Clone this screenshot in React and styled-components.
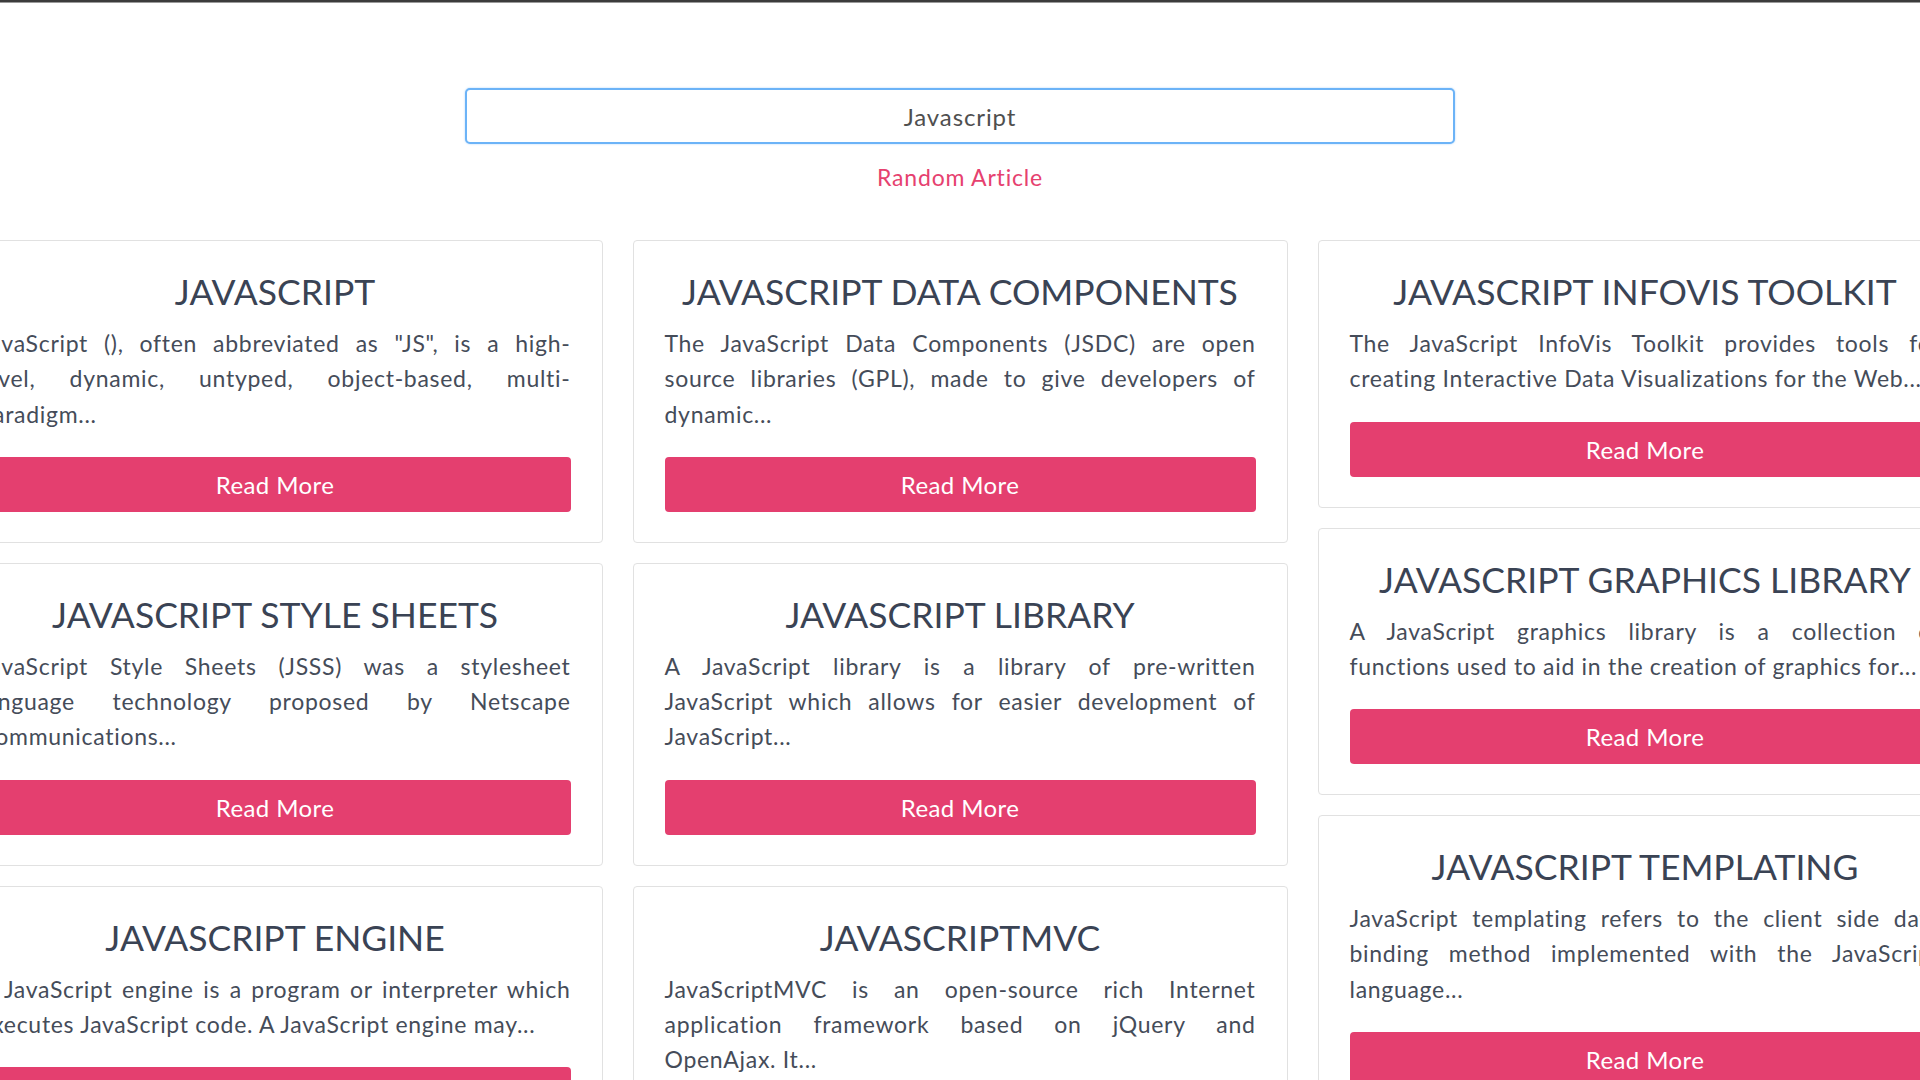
import React from "react";
import styled, { createGlobalStyle } from "styled-components";

const GlobalStyle = createGlobalStyle`
  html, body {
    margin: 0;
    padding: 0;
    overflow: hidden;
    background-color: #ffffff;
  }

  body {
    font-family: "Lato", "Open Sans", sans-serif;
    border-top: 2px solid #3c3c3c;
    box-shadow: inset 0 1px 0 #9a9a9a;
  }
`;

const Page = styled.div`
  display: flex;
  flex-direction: column;
  align-items: center;
  width: 100vw;
  height: 1078px;
  overflow: hidden;
`;

const SearchArea = styled.div`
  display: flex;
  flex-direction: column;
  align-items: center;
  padding-top: 86px;
  width: 990px;
`;

const SearchInput = styled.input`
  box-sizing: border-box;
  width: 100%;
  height: 56px;
  border: 2px solid #6cb3f7;
  border-radius: 5px;
  box-shadow: 0 0 2px rgba(108, 179, 247, 0.6);
  font-family: inherit;
  font-size: 24px;
  letter-spacing: 0.9px;
  color: #4f4f4f;
  text-align: center;
  background-color: #ffffff;

  &:focus {
    outline: none;
  }
`;

const RandomLink = styled.a`
  margin-top: 20px;
  font-size: 23px;
  letter-spacing: 0.8px;
  line-height: 26px;
  color: #e6416f;
  text-decoration: none;
  cursor: pointer;
`;

const Masonry = styled.div`
  display: flex;
  justify-content: center;
  gap: 30px;
  width: 100%;
  margin-top: 50px;
`;

const Column = styled.div`
  display: flex;
  flex-direction: column;
  gap: 20px;
  flex: 0 0 655px;
  width: 655px;
`;

const Card = styled.div`
  box-sizing: border-box;
  display: flex;
  flex-direction: column;
  padding: 28px 31px 30px;
  border: 1px solid #e1e1e1;
  border-radius: 4px;
  background-color: #ffffff;
`;

const Title = styled.h2`
  margin: 0 0 12px;
  font-size: 35.5px;
  font-weight: 400;
  line-height: 45px;
  color: #3a4354;
  text-align: center;
  text-transform: uppercase;
  white-space: nowrap;
`;

const Extract = styled.div`
  font-size: 23px;
  letter-spacing: 0.7px;
  line-height: 35.3px;
  color: #454c59;
`;

const Line = styled.span`
  display: block;
  white-space: nowrap;
  text-align: ${(p) => (p.$last ? "left" : "justify")};
  text-align-last: ${(p) => (p.$last ? "left" : "justify")};
`;

const ReadMore = styled.button`
  margin-top: 25px;
  height: 55px;
  border: none;
  border-radius: 4px;
  background-color: #e43f6f;
  color: #ffffff;
  font-family: inherit;
  font-size: 24px;
  letter-spacing: 0.4px;
  cursor: pointer;
`;

const columns = [
  [
    {
      title: "JavaScript",
      lines: [
        "JavaScript (), often abbreviated as \"JS\", is a high-",
        "level, dynamic, untyped, object-based, multi-",
        "paradigm...",
      ],
    },
    {
      title: "JavaScript Style Sheets",
      lines: [
        "JavaScript Style Sheets (JSSS) was a stylesheet",
        "language technology proposed by Netscape",
        "Communications...",
      ],
    },
    {
      title: "JavaScript engine",
      lines: [
        "A JavaScript engine is a program or interpreter which",
        "executes JavaScript code. A JavaScript engine may...",
      ],
    },
  ],
  [
    {
      title: "JavaScript Data Components",
      lines: [
        "The JavaScript Data Components (JSDC) are open",
        "source libraries (GPL), made to give developers of",
        "dynamic...",
      ],
    },
    {
      title: "JavaScript library",
      lines: [
        "A JavaScript library is a library of pre-written",
        "JavaScript which allows for easier development of",
        "JavaScript...",
      ],
    },
    {
      title: "JavaScriptMVC",
      lines: [
        "JavaScriptMVC is an open-source rich Internet",
        "application framework based on jQuery and",
        "OpenAjax. It...",
      ],
    },
  ],
  [
    {
      title: "JavaScript InfoVis Toolkit",
      lines: [
        "The JavaScript InfoVis Toolkit provides tools for",
        "creating Interactive Data Visualizations for the Web...",
      ],
    },
    {
      title: "JavaScript graphics library",
      lines: [
        "A JavaScript graphics library is a collection of",
        "functions used to aid in the creation of graphics for...",
      ],
    },
    {
      title: "JavaScript templating",
      lines: [
        "JavaScript templating refers to the client side data",
        "binding method implemented with the JavaScript",
        "language...",
      ],
    },
  ],
];

const ArticleCard = ({ title, lines }) => (
  <Card>
    <Title>{title}</Title>
    <Extract>
      {lines.map((line, i) => (
        <Line key={i} $last={i === lines.length - 1}>
          {line}
        </Line>
      ))}
    </Extract>
    <ReadMore>Read More</ReadMore>
  </Card>
);

const App = () => {
  return (
    <>
      <GlobalStyle />
      <Page>
        <SearchArea>
          <SearchInput defaultValue="Javascript" autoFocus />
          <RandomLink>Random Article</RandomLink>
        </SearchArea>
        <Masonry>
          {columns.map((col, c) => (
            <Column key={c}>
              {col.map((article) => (
                <ArticleCard key={article.title} {...article} />
              ))}
            </Column>
          ))}
        </Masonry>
      </Page>
    </>
  );
};

export default App;
